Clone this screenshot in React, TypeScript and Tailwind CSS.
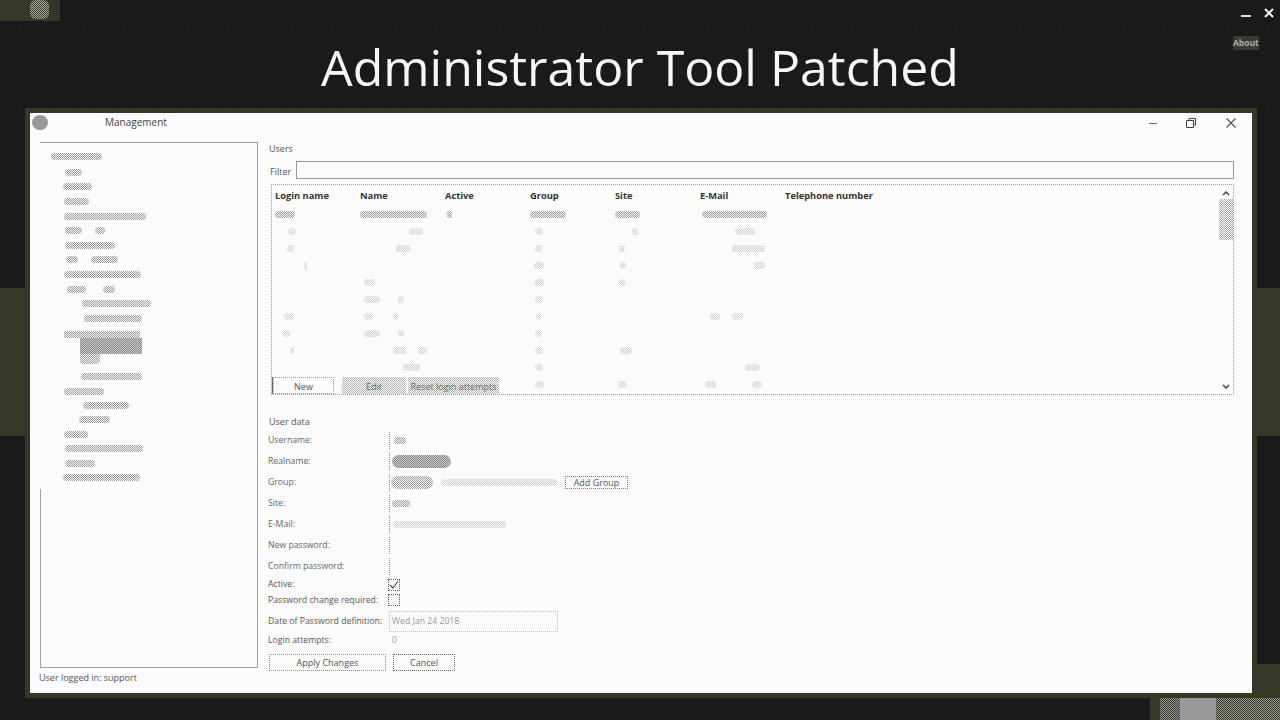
import React from 'react';

const DARK = 'bg-[repeating-conic-gradient(#9a9a9a_0_25%,#fbfbfb_0_50%)] bg-[length:2px_2px] rounded-full';
const FAINT = 'bg-[repeating-conic-gradient(#cfcfcf_0_25%,#fbfbfb_0_50%)] bg-[length:2px_2px] rounded-full';
const DENSE = 'bg-[repeating-conic-gradient(#8a8a8a_0_25%,#c8c8c8_0_50%)] bg-[length:2px_2px]';

// smudged out text: a list of [left gap, width] pairs
const Smudge: React.FC<{ segs: number[][]; faint?: boolean; h?: number }> = ({ segs, faint, h = 7 }) => (
    <div className="flex items-center">
        {segs.map((s, i) => (
            <span key={i} className={faint ? FAINT : DARK} style={{ marginLeft: s[0], width: s[1], height: h }} />
        ))}
    </div>
);

const treeRows: number[][][] = [
    [[25, 17]],
    [[23, 29]],
    [[24, 25]],
    [[24, 82]],
    [[25, 17], [13, 10]],
    [[25, 50]],
    [[26, 12], [13, 27]],
    [[24, 77]],
    [[27, 19], [17, 12]],
    [[42, 69]],
    [[44, 58]],
];

const treeRowsAfter: number[][][] = [
    [[41, 61]],
    [[24, 40]],
    [[43, 46]],
    [[39, 31]],
    [[24, 24]],
    [[25, 78]],
    [[25, 30]],
    [[23, 77]],
];

const headers = ['Login name', 'Name', 'Active', 'Group', 'Site', 'E-Mail', 'Telephone number'];

const tableRows: number[][][][] = [
    [[[0, 20]], [[0, 67]], [[2, 5]], [[0, 36]], [[0, 25]], [[2, 65]], []],
    [[[13, 8]], [[49, 14]], [], [[5, 8]], [[17, 6]], [[35, 20]], []],
    [[[12, 7]], [[36, 15]], [], [[5, 7]], [[4, 6]], [[32, 33]], []],
    [[[29, 3]], [], [], [[4, 10]], [[5, 6]], [[54, 11]], []],
    [[], [[4, 11]], [], [[4, 10]], [[4, 7]], [], []],
    [[], [[4, 16], [18, 6]], [], [[5, 8]], [], [], []],
    [[[9, 10]], [[4, 9], [20, 5]], [], [[6, 5]], [], [[10, 10], [12, 11]], []],
    [[[7, 8]], [[4, 16], [18, 6]], [], [[5, 7]], [], [], []],
    [[[16, 3]], [[33, 13], [12, 9]], [], [[5, 8]], [[5, 12]], [], []],
    [[], [[43, 17]], [], [[5, 8]], [], [[45, 15]], []],
    [[], [], [], [[5, 9]], [[3, 9]], [[5, 11], [36, 10]], []],
];

const FormRow: React.FC<{ label: string; children?: React.ReactNode }> = ({ label, children }) => (
    <div className="flex h-[21px] items-center">
        <span className="w-[121px] shrink-0 text-[8.700px] text-[#666]">{label}</span>
        <div className="flex h-[17px] items-center gap-[8px] border-l border-dotted border-[#888]">{children}</div>
    </div>
);

const Check: React.FC<{ checked?: boolean }> = ({ checked }) => (
    <div className="flex h-[12px] w-[12px] items-center justify-center border border-dotted border-[#555]">
        {checked && (
            <svg width="10" height="10" viewBox="0 0 10 10" fill="none" stroke="#555" strokeWidth="1.2">
                <path d="M1 5l3 3 5-7" />
            </svg>
        )}
    </div>
);

export default function App() {
    return (
        <div className="relative h-[720px] w-[1280px] overflow-hidden bg-[#1a1a1a] font-['Open_Sans',sans-serif]">
            {/* backdrop of the slide */}
            <div className="absolute inset-x-0 top-[24px] h-[84px] bg-[radial-gradient(circle,#33332a_0.7px,transparent_0.8px)] bg-[length:13px_11px]" />
            <div className="absolute left-0 top-[288px] h-[148px] w-[25px] bg-[#363726]" />
            <div className="absolute right-0 top-[288px] h-[148px] w-[23px] bg-[#363726]" />
            <div className="absolute right-0 top-[664px] h-[56px] w-[23px] bg-[#363726]" />
            <div className="absolute left-[1150px] top-[698px] flex h-[22px] w-[130px] bg-[#363726]">
                <div className="ml-[10px] w-[20px] bg-[repeating-conic-gradient(#999_0_25%,#363726_0_50%)] bg-[length:2px_2px]" />
                <div className="w-[36px] bg-[#999]" />
                <div className="w-[64px] bg-[repeating-conic-gradient(#999_0_25%,#363726_0_50%)] bg-[length:2px_2px]" />
            </div>
            <div className="absolute left-0 top-0 flex h-[21px] w-[60px] justify-end bg-[#363726] pr-[11px]">
                <span className="h-[19px] w-[19px] rounded-md bg-[repeating-conic-gradient(#b0b0a0_0_25%,#363726_0_50%)] bg-[length:2px_2px]" />
            </div>
            <div className="absolute left-[1241px] top-[15px] h-[2px] w-[10px] bg-[#ddd]" />
            <svg className="absolute left-[1264px] top-[8px]" width="10" height="10" viewBox="0 0 10 10" stroke="#eee" strokeWidth="2">
                <path d="M1 1l8 8M9 1l-8 8" />
            </svg>
            <span className="absolute left-[1233px] top-[36px] bg-[#3a3a32] text-[8.500px] font-bold leading-[14px] text-[#aaa]">About</span>

            <header className="relative flex h-[108px] items-start justify-center">
                <h1 className="mt-[33px] text-[50px] leading-[68px] text-[#f6f6f6]">Administrator Tool Patched</h1>
            </header>

            {/* management window */}
            <div className="relative ml-[25px] flex h-[590px] w-[1232px] flex-col border-[5px] border-[#363726] bg-[#fbfbfb] text-[9px] leading-[13px] text-[#555]">
                <div className="flex h-[29px] shrink-0 items-center pb-[10px]">
                    <span className="ml-[2px] h-[15px] w-[16px] rounded-full bg-[#999]" />
                    <span className="ml-[57px] text-[10px] text-[#444]">Management</span>
                    <svg className="ml-auto" width="10" height="10" viewBox="0 0 10 10" stroke="#666">
                        <path d="M1 5.5h8" />
                    </svg>
                    <svg className="ml-[28px]" width="10" height="10" viewBox="0 0 10 10" fill="none" stroke="#444">
                        <path d="M3 2.500V.5h6.500v6.500H7.500M.5 2.500h7v7h-7z" />
                    </svg>
                    <svg className="ml-[30px] mr-[16px]" width="10" height="10" viewBox="0 0 10 10" stroke="#555" strokeWidth="1.2">
                        <path d="M.5.5l9 9M9.500.5l-9 9" />
                    </svg>
                </div>

                <div className="flex flex-1 pl-[10px]">
                    {/* tree */}
                    <div className="w-[218px] shrink-0">
                        <div className="flex h-[526px] flex-col border-r border-t border-b border-[#a0a0a0]">
                            <div className="flex h-[346px] flex-col pt-[6px]">
                                <div className="mb-[2px] flex h-[14px] items-center">
                                    <Smudge segs={[[11, 51]]} />
                                </div>
                                {treeRows.map((segs, i) => (
                                    <div key={i} className="flex h-[14.600px] items-center">
                                        <Smudge segs={segs} />
                                    </div>
                                ))}
                                <div className="mt-[5px] flex h-[33px] flex-col">
                                    <span className="ml-[24px] h-[7px] w-[76px] bg-[repeating-conic-gradient(#9a9a9a_0_25%,#fbfbfb_0_50%)] bg-[length:2px_2px]" />
                                    <span className={`ml-[40px] h-[16px] w-[62px] ${DENSE}`} />
                                    <span className="ml-[40px] h-[10px] w-[20px] rounded-b bg-[repeating-conic-gradient(#9a9a9a_0_25%,#fbfbfb_0_50%)] bg-[length:2px_2px]" />
                                </div>
                                <div className="mt-[6px]">
                                    {treeRowsAfter.map((segs, i) => (
                                        <div key={i} className="flex h-[14.400px] items-center">
                                            <Smudge segs={segs} />
                                        </div>
                                    ))}
                                </div>
                            </div>
                            <div className="flex-1 border-l border-[#a0a0a0]" />
                        </div>
                        <p className="-ml-[1px] mt-[3px]">User logged in: support</p>
                    </div>

                    {/* users */}
                    <div className="ml-[10px] w-[966px] shrink-0">
                        <p className="ml-[1px]">Users</p>
                        <div className="mt-[6px] flex h-[18px] items-center">
                            <span className="ml-[2px] mt-[2px] w-[26px]">Filter</span>
                            <div className="h-[18px] flex-1 border border-[#999]" />
                        </div>

                        <div className="relative ml-[3px] mt-[5px] h-[211px] border border-dotted border-[#999]">
                            <div className="grid h-[21px] grid-cols-[repeat(7,85px)] items-center pl-[3px] text-[9.300px] font-bold text-[#333]">
                                {headers.map(h => (
                                    <span key={h} className="whitespace-nowrap">{h}</span>
                                ))}
                            </div>
                            {tableRows.map((row, i) => (
                                <div key={i} className="grid h-[17px] grid-cols-[repeat(7,85px)] items-center pl-[3px]">
                                    {row.map((segs, j) => (
                                        <Smudge key={j} segs={segs} faint={i > 0} />
                                    ))}
                                </div>
                            ))}

                            {/* buttons lie over the last row */}
                            <div className="absolute bottom-0 left-0 flex h-[17px] items-stretch border-l border-[#666] bg-[#fbfbfb] text-[#555]">
                                <div className="flex w-[61px] items-center justify-center border border-dotted border-[#999] pt-[1px]">New</div>
                                <div className="ml-[8px] flex w-[64px] items-center justify-center bg-[repeating-conic-gradient(#b5b5b5_0_25%,#fbfbfb_0_50%)] bg-[length:2px_2px] pt-[1px] text-[#666]">Edit</div>
                                <div className="ml-[2px] flex w-[91px] items-center justify-center whitespace-nowrap bg-[repeating-conic-gradient(#b5b5b5_0_25%,#fbfbfb_0_50%)] bg-[length:2px_2px] pt-[1px] text-[#666]">Reset login attempts</div>
                            </div>

                            {/* scrollbar */}
                            <div className="absolute right-[0px] top-0 flex h-full w-[14px] flex-col items-center">
                                <svg className="mt-[5px]" width="8" height="6" viewBox="0 0 8 6" fill="none" stroke="#444" strokeWidth="1.500">
                                    <path d="M1 5l3-3 3 3" />
                                </svg>
                                <div className="mt-[3px] h-[41px] w-[14px] bg-[repeating-conic-gradient(#aaa_0_25%,#fbfbfb_0_50%)] bg-[length:2px_2px]" />
                                <svg className="mt-auto mb-[4px]" width="8" height="6" viewBox="0 0 8 6" fill="none" stroke="#444" strokeWidth="1.500">
                                    <path d="M1 1l3 3 3-3" />
                                </svg>
                            </div>
                        </div>

                        <p className="ml-[1px] mt-[20px] h-[15px]">User data</p>
                        <FormRow label="Username:"><Smudge segs={[[4, 12]]} /></FormRow>
                        <FormRow label="Realname:"><span className={`ml-[2px] h-[13px] w-[59px] rounded-full ${DENSE}`} /></FormRow>
                        <FormRow label="Group:">
                            <div className="flex items-center">
                                <Smudge segs={[[1, 42]]} h={13} />
                                <Smudge segs={[[8, 116]]} faint />
                            </div>
                            <div className="flex h-[13px] w-[63px] items-center justify-center border border-dotted border-[#777]">Add Group</div>
                        </FormRow>
                        <FormRow label="Site:"><Smudge segs={[[2, 18]]} /></FormRow>
                        <FormRow label="E-Mail:"><Smudge segs={[[3, 113]]} faint /></FormRow>
                        <FormRow label="New password:" />
                        <FormRow label="Confirm password:" />
                        <div className="flex h-[15px] items-center text-[8.700px]">
                            <span className="w-[120px] shrink-0">Active:</span>
                            <Check checked />
                        </div>
                        <div className="flex h-[16px] items-center text-[8.700px]">
                            <span className="w-[120px] shrink-0 whitespace-nowrap">Password change required:</span>
                            <Check />
                        </div>
                        <div className="mt-[3px] flex h-[21px] items-center text-[8.700px]">
                            <span className="w-[121px] shrink-0 whitespace-nowrap">Date of Password definition:</span>
                            <div className="flex h-[21px] w-[169px] items-center border border-dotted border-[#bbb] pl-[2px] text-[#999]">Wed Jan 24 2018</div>
                        </div>
                        <div className="flex h-[16px] items-center text-[8.700px]">
                            <span className="w-[121px] shrink-0">Login attempts:</span>
                            <div className="flex h-[16px] w-[169px] items-center pl-[3px] text-[#999]">0</div>
                        </div>
                        <div className="mt-[6px] flex h-[17px]">
                            <div className="ml-[1px] flex w-[117px] items-center justify-center border border-dotted border-[#888]">Apply Changes</div>
                            <div className="ml-[7px] flex w-[62px] items-center justify-center border border-dotted border-[#666]">Cancel</div>
                        </div>
                    </div>
                </div>
            </div>
        </div>
    );
}
